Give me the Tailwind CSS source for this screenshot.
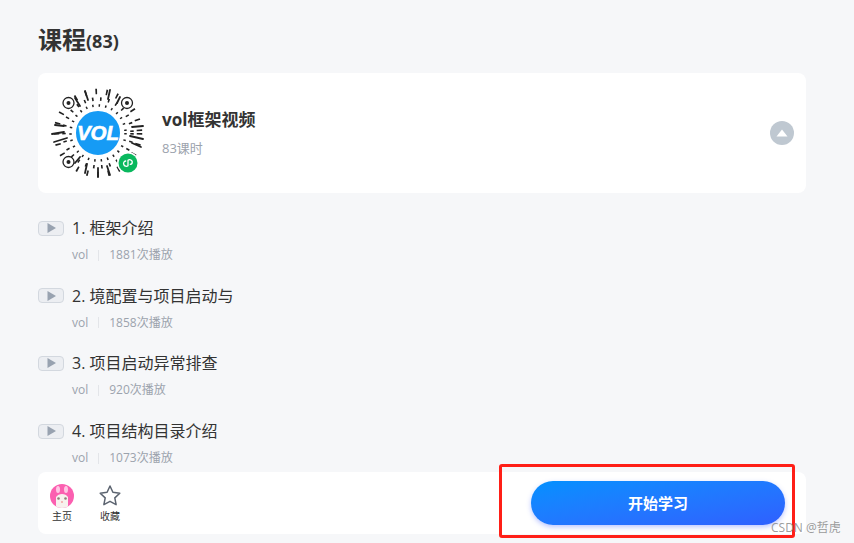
<!DOCTYPE html>
<html lang="zh">
<head>
<meta charset="utf-8">
<script src="https://cdn.jsdelivr.net/npm/@tailwindcss/browser@4"></script>
</head>
<body class="m-0 bg-[#f6f7f9] font-['Open_Sans','Noto_Sans_CJK_SC',sans-serif]">
<div class="relative h-[543px] w-[854px] overflow-hidden">
  <div class="flex h-[543px] w-[806px] ml-[38px] flex-col">
    <h1 class="flex h-[73px] items-center pt-[7px] font-bold text-[#333]">
      <span class="text-[24px] leading-none">课程</span><span class="text-[18px] leading-none mt-[2px]">(83)</span>
    </h1>

    <section class="flex h-[120px] w-[768px] shrink-0 items-center rounded-lg bg-white pl-[10px] pr-[12px]">
      <svg class="h-[100px] w-[100px] shrink-0" viewBox="0 0 100 100" fill="none">
        <g stroke="#222">
          <circle cx="50" cy="50" r="41.500" stroke-width="5.500" stroke-dasharray="1.700 9"/>
          <circle cx="50" cy="50" r="34" stroke-width="3.500" stroke-dasharray="1.600 6.500"/>
          <circle cx="50" cy="50" r="27.500" stroke-width="2.500" stroke-dasharray="1.500 5"/>
          <path stroke-width="1.800" stroke-linecap="round" d="M4 51l12-2M6 59l13-4M7 42l9 1M84 44l11-1M82 53l13 3M84 60l9 4M27 15l5 8M37 8l3 9M62 7l-2 9M72 14l-3 6M27 80l5-6M37 90l2-9M50 94v-9M62 92l-3-9"/>
        </g>
        <g fill="#fff" stroke="#222" stroke-width="1.300">
          <circle cx="20.500" cy="20" r="5.500"/><circle cx="79" cy="20" r="5.500"/><circle cx="20.500" cy="79" r="5.500"/>
        </g>
        <g fill="#222"><circle cx="20.500" cy="20" r="2"/><circle cx="79" cy="20" r="2"/><circle cx="20.500" cy="79" r="2"/></g>
        <circle cx="50" cy="50" r="23" fill="#169bf5" stroke="#fff" stroke-width="2"/>
        <text x="50" y="57" text-anchor="middle" font-family="'Liberation Sans',sans-serif" font-size="20.500" font-weight="700" font-style="italic" fill="#fff" stroke="#fff" stroke-width=".6">VOL</text>
        <circle cx="80" cy="80" r="11" fill="#fff"/>
        <circle cx="80" cy="80" r="9.500" fill="#09b85e"/>
        <path d="M75.800 81.500a2.600 2.600 0 0 0 4.200 1.200v-5.400a2.600 2.600 0 0 1 4.200 1.200a2.500 2.500 0 0 1-1.900 2.900M77.700 78a2.500 2.500 0 0 0-1.900 3.500" stroke="#fff" stroke-width="1.300" fill="none" stroke-linecap="round"/>
      </svg>
      <div class="ml-[14px] flex-1">
        <h2 class="text-[17px] leading-[24px] font-bold text-[#333] -mt-[1px]">vol框架视频</h2>
        <p class="mt-[7px] text-[13px] leading-[18px] text-[#9ca3ad]">83课时</p>
      </div>
      <span class="flex h-6 w-6 items-center justify-center rounded-full bg-[#bfc8d1]">
        <svg class="h-[8px] w-[12px]" viewBox="0 0 12 8"><path d="M6 0.500L11.500 7.500H0.500Z" fill="#fff"/></svg>
      </span>
    </section>

    <ul class="h-[279px] w-[768px] shrink-0 overflow-hidden pt-[23px]">
      <li class="h-[67.700px]">
        <div class="flex h-[24px] items-center">
          <span class="flex h-[15px] w-[26px] items-center justify-center rounded-[4px] border border-[#d3d8df] bg-[#eceef2]"><svg class="h-[10px] w-[9px]" viewBox="0 0 9 10"><path d="M0.500 0L9 5L0.500 10Z" fill="#98a2b0"/></svg></span>
          <span class="ml-[8px] text-[16px] leading-[24px] text-[#333]">1. 框架介绍</span>
        </div>
        <div class="mt-[6px] ml-[34px] flex h-[18px] items-center text-[12px] text-[#9ca3ad]"><span>vol</span><span class="mx-[10px] h-[11px] w-px bg-[#e3e5e9]"></span><span>1881次播放</span></div>
      </li>
      <li class="h-[67.700px]">
        <div class="flex h-[24px] items-center">
          <span class="flex h-[15px] w-[26px] items-center justify-center rounded-[4px] border border-[#d3d8df] bg-[#eceef2]"><svg class="h-[10px] w-[9px]" viewBox="0 0 9 10"><path d="M0.500 0L9 5L0.500 10Z" fill="#98a2b0"/></svg></span>
          <span class="ml-[8px] text-[16px] leading-[24px] text-[#333]">2. 境配置与项目启动与</span>
        </div>
        <div class="mt-[6px] ml-[34px] flex h-[18px] items-center text-[12px] text-[#9ca3ad]"><span>vol</span><span class="mx-[10px] h-[11px] w-px bg-[#e3e5e9]"></span><span>1858次播放</span></div>
      </li>
      <li class="h-[67.700px]">
        <div class="flex h-[24px] items-center">
          <span class="flex h-[15px] w-[26px] items-center justify-center rounded-[4px] border border-[#d3d8df] bg-[#eceef2]"><svg class="h-[10px] w-[9px]" viewBox="0 0 9 10"><path d="M0.500 0L9 5L0.500 10Z" fill="#98a2b0"/></svg></span>
          <span class="ml-[8px] text-[16px] leading-[24px] text-[#333]">3. 项目启动异常排查</span>
        </div>
        <div class="mt-[6px] ml-[34px] flex h-[18px] items-center text-[12px] text-[#9ca3ad]"><span>vol</span><span class="mx-[10px] h-[11px] w-px bg-[#e3e5e9]"></span><span>920次播放</span></div>
      </li>
      <li class="h-[67.700px]">
        <div class="flex h-[24px] items-center">
          <span class="flex h-[15px] w-[26px] items-center justify-center rounded-[4px] border border-[#d3d8df] bg-[#eceef2]"><svg class="h-[10px] w-[9px]" viewBox="0 0 9 10"><path d="M0.500 0L9 5L0.500 10Z" fill="#98a2b0"/></svg></span>
          <span class="ml-[8px] text-[16px] leading-[24px] text-[#333]">4. 项目结构目录介绍</span>
        </div>
        <div class="mt-[6px] ml-[34px] flex h-[18px] items-center text-[12px] text-[#9ca3ad]"><span>vol</span><span class="mx-[10px] h-[11px] w-px bg-[#e3e5e9]"></span><span>1073次播放</span></div>
      </li>
    </ul>

    <footer class="flex h-[62px] w-[768px] shrink-0 items-center rounded-lg bg-white pl-[12px] pr-[21px]">
      <div class="flex w-[48px] flex-col items-start">
        <svg class="mt-[1px] h-6 w-6" viewBox="0 0 24 24">
          <defs><clipPath id="a"><circle cx="12" cy="12" r="12"/></clipPath></defs>
          <g clip-path="url(#a)">
            <rect width="24" height="24" fill="#fb5fb0"/>
            <path d="M6 24V13c1.500-2 3.500-3 6-3s4.500 1 6 3v11Z" fill="#f7f1ee"/>
            <ellipse cx="8" cy="5.500" rx="2" ry="3.500" fill="#ffc6e4"/><ellipse cx="16" cy="5.500" rx="2" ry="3.500" fill="#ffc6e4"/>
            <circle cx="8.500" cy="14.500" r="1.300" fill="#8d7f78"/><circle cx="15.500" cy="14.500" r="1.300" fill="#8d7f78"/>
            <circle cx="12" cy="18" r="1" fill="#f4a3a3"/>
          </g>
        </svg>
        <span class="mt-[1px] w-6 text-center text-[10px] leading-[14px] whitespace-nowrap text-[#333]">主页</span>
      </div>
      <div class="flex w-[24px] flex-col items-center">
        <svg class="mt-[1px] h-6 w-6" viewBox="0 0 24 24" fill="none"><path d="M12 2l2.900 6.200 6.900 1-5 4.700 1.300 6.800-6.100-3.400-6.100 3.400 1.300-6.800-5-4.700 6.900-1Z" stroke="#5c6470" stroke-width="1.500" stroke-linejoin="round"/></svg>
        <span class="mt-[1px] text-[10px] leading-[14px] whitespace-nowrap text-[#333]">收藏</span>
      </div>
      <button class="ml-auto h-[44px] w-[254px] rounded-full bg-gradient-to-br from-[#0090ff] to-[#2f5fff] text-[15px] font-bold text-white shadow-[0_2px_5px_rgba(60,90,255,0.35)]">开始学习</button>
    </footer>
  </div>

  <div class="pointer-events-none absolute top-[464px] left-[499px] h-[74px] w-[296px] rounded-[3px] border-[3px] border-[#ff1f17]"></div>
  <span class="absolute top-[519px] left-[771px] text-[12px] leading-[18px] text-[#8f8f8f]/90">CSDN @哲虎</span>
</div>
</body>
</html>
